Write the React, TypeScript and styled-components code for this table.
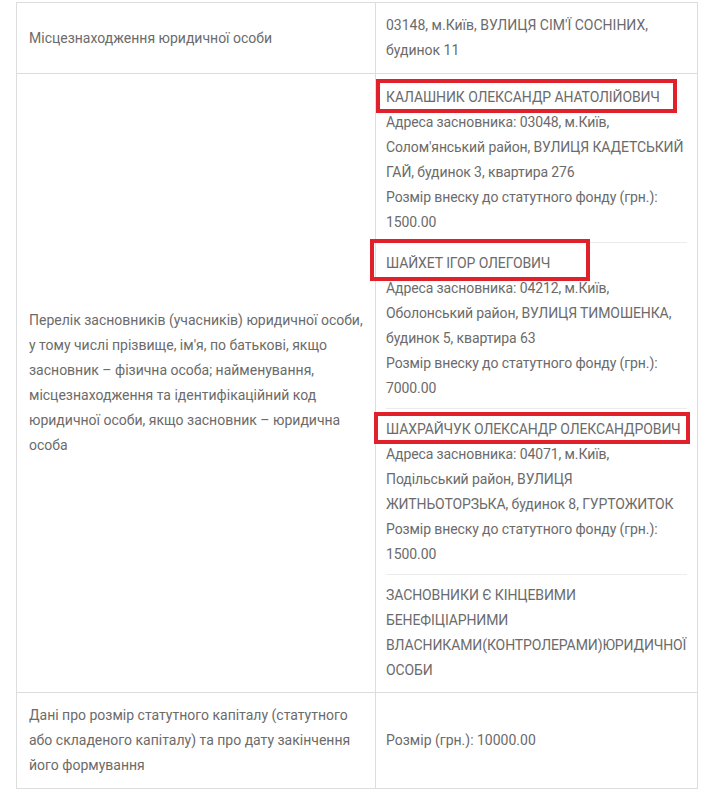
import styled, { createGlobalStyle } from "styled-components";

interface IFounder {
  name: string;
  address: string[];
  share: string;
  mark: { top: number; left: number; width: number; height: number };
}

interface IMarkProps {
  $top: number;
  $left: number;
  $width: number;
  $height: number;
}

const founders: IFounder[] = [
  {
    name: "КАЛАШНИК ОЛЕКСАНДР АНАТОЛІЙОВИЧ",
    address: [
      "Адреса засновника: 03048, м.Київ,",
      "Солом'янський район, ВУЛИЦЯ КАДЕТСЬКИЙ",
      "ГАЙ, будинок 3, квартира 276",
    ],
    share: "1500.00",
    mark: { top: -6, left: -10, width: 301, height: 34 },
  },
  {
    name: "ШАЙХЕТ ІГОР ОЛЕГОВИЧ",
    address: [
      "Адреса засновника: 04212, м.Київ,",
      "Оболонський район, ВУЛИЦЯ ТИМОШЕНКА,",
      "будинок 5, квартира 63",
    ],
    share: "7000.00",
    mark: { top: -12, left: -16, width: 220, height: 42 },
  },
  {
    name: "ШАХРАЙЧУК ОЛЕКСАНДР ОЛЕКСАНДРОВИЧ",
    address: [
      "Адреса засновника: 04071, м.Київ,",
      "Подільський район, ВУЛИЦЯ",
      "ЖИТНЬОТОРЗЬКА, будинок 8, ГУРТОЖИТОК",
    ],
    share: "1500.00",
    mark: { top: -5, left: -12, width: 316, height: 32 },
  },
];

const GlobalStyle = createGlobalStyle`
  body {
    margin: 0;
    background: #ffffff;
    font-family: Roboto, "Noto Sans", sans-serif;
  }
`;

const Page = styled.div`
  padding: 2px 14px 0 16px;
`;

const Table = styled.table`
  width: 682px;
  table-layout: fixed;
  border-collapse: collapse;
  font-size: 14px;
  line-height: 25px;
  color: #6b6b6b;
`;

const Cell = styled.td`
  border: 1px solid #dddddd;
  vertical-align: middle;
  padding: 10px 12px;
`;

const LabelCell = styled(Cell)`
  width: 334px;
`;

const ValueCell = styled(Cell)`
  padding: 10px 10px 10px 10px;
`;

const FoundersCell = styled(Cell)`
  padding: 3px 10px 2px 10px;
  letter-spacing: -0.1px;
`;

const Block = styled.div`
  padding: 8px 0 7px;
  border-bottom: 1px solid #ececec;

  &:last-child {
    border-bottom: none;
  }
`;

const Line = styled.div`
  white-space: nowrap;
`;

const Name = styled.div`
  position: relative;
  white-space: nowrap;
`;

// червона рамка поверх прізвища
const Mark = styled.span<IMarkProps>`
  position: absolute;
  top: ${(p) => p.$top}px;
  left: ${(p) => p.$left}px;
  width: ${(p) => p.$width}px;
  height: ${(p) => p.$height}px;
  box-sizing: border-box;
  border: 4px solid #e0202b;
  pointer-events: none;
`;

const App = () => {
  return (
    <Page>
      <GlobalStyle />
      <Table>
        <tbody>
          <tr>
            <LabelCell>Місцезнаходження юридичної особи</LabelCell>
            <ValueCell>
              <Line>03148, м.Київ, ВУЛИЦЯ СІМ'Ї СОСНІНИХ,</Line>
              <Line>будинок 11</Line>
            </ValueCell>
          </tr>
          <tr>
            <LabelCell>
              Перелік засновників (учасників) юридичної особи, у тому числі
              прізвище, ім'я, по батькові, якщо засновник – фізична особа;
              найменування, місцезнаходження та ідентифікаційний код юридичної
              особи, якщо засновник – юридична особа
            </LabelCell>
            <FoundersCell>
              {founders.map((f) => (
                <Block key={f.name}>
                  <Name>
                    {f.name}
                    <Mark
                      $top={f.mark.top}
                      $left={f.mark.left}
                      $width={f.mark.width}
                      $height={f.mark.height}
                    />
                  </Name>
                  {f.address.map((line) => (
                    <Line key={line}>{line}</Line>
                  ))}
                  <Line>Розмір внеску до статутного фонду (грн.):</Line>
                  <Line>{f.share}</Line>
                </Block>
              ))}
              <Block>
                <Line>ЗАСНОВНИКИ Є КІНЦЕВИМИ</Line>
                <Line>БЕНЕФІЦІАРНИМИ</Line>
                <Line>ВЛАСНИКАМИ(КОНТРОЛЕРАМИ)ЮРИДИЧНОЇ</Line>
                <Line>ОСОБИ</Line>
              </Block>
            </FoundersCell>
          </tr>
          <tr>
            <LabelCell>
              Дані про розмір статутного капіталу (статутного або складеного
              капіталу) та про дату закінчення його формування
            </LabelCell>
            <ValueCell>Розмір (грн.): 10000.00</ValueCell>
          </tr>
        </tbody>
      </Table>
    </Page>
  );
};

export default App;
